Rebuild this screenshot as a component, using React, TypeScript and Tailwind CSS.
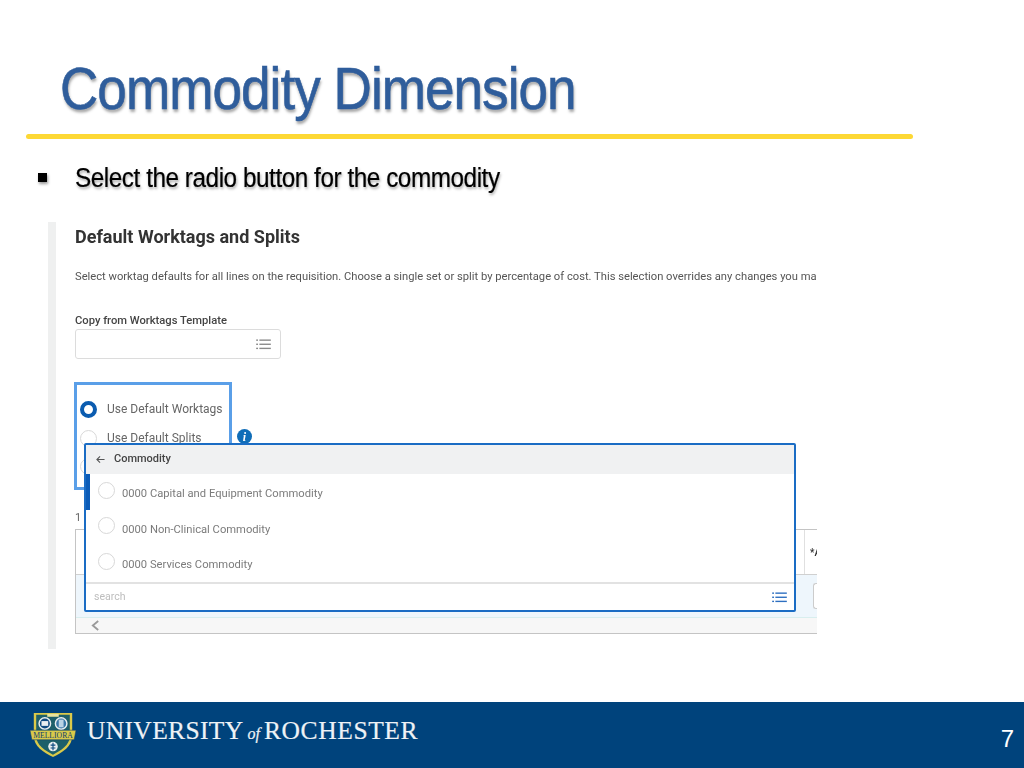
const ListIcon = ({ className }: { className: string }) => (
  <svg viewBox="0 0 16 12" className={className} fill="currentColor">
    <rect x="0" y="0.5" width="2" height="1.5" />
    <rect x="3.5" y="0.5" width="12.5" height="1.5" />
    <rect x="0" y="5" width="2" height="1.5" />
    <rect x="3.5" y="5" width="12.5" height="1.5" />
    <rect x="0" y="9.5" width="2" height="1.5" />
    <rect x="3.5" y="9.5" width="12.5" height="1.5" />
  </svg>
);

const Crest = () => (
  <svg viewBox="0 0 50 50" className="w-[48px] h-[48px]">
    <path d="M5 2 H45 V26 C45 37 35 43 25 48 C15 43 5 37 5 26 Z" fill="#d9c94a" />
    <path d="M7.5 4 H42.5 V26 C42.5 36 33 41 25 45.5 C17 41 7.5 36 7.5 26 Z" fill="#1d5f6a" />
    <rect x="19" y="3" width="12" height="3" fill="#e8e2a0" />
    <circle cx="16.5" cy="13" r="6" fill="#0f4a80" stroke="#e9eef0" strokeWidth="1.5" />
    <circle cx="33.5" cy="13" r="6" fill="#3a78a8" stroke="#e9eef0" strokeWidth="1.5" />
    <rect x="13" y="10.5" width="7" height="5" fill="#e9eef0" />
    <rect x="31" y="9" width="5" height="8" fill="#b9d3e4" />
    <path d="M1 20 H49 L47 30 H3 Z" fill="#d9c94a" stroke="#123f6d" strokeWidth="0.6" />
    <text x="25" y="28" textAnchor="middle" fontSize="8" fill="#123f6d" className="font-['Liberation_Serif',serif]">MELLIORA</text>
    <circle cx="25" cy="37" r="5" fill="#e9eef0" />
    <path d="M25 33 V41 M22.5 35.5 H27.5 M22.5 38.5 H27.5" stroke="#0f4a80" strokeWidth="1.2" />
  </svg>
);

const PopupOption = ({ label, marked }: { label: string; marked?: boolean }) => (
  <div className="relative flex h-[35.5px] items-center pl-[12px] gap-[7px]">
    {marked && <div className="absolute left-0 top-0 h-[36px] w-[4px] bg-[#0b5cb8]" />}
    <span className="mb-[3px] h-[17px] w-[17px] rounded-full border border-[#d8d8d8] bg-white" />
    <span className="mt-[6px] text-[11.2px] text-[#7b7b7b]">{label}</span>
  </div>
);

const App = () => {
  return (
    <div className="flex h-[768px] w-[1024px] flex-col overflow-hidden bg-white font-['Liberation_Sans',Arial,sans-serif]">
      <h1 className="ml-[60px] mt-[53px] h-[81px] origin-left scale-x-[0.885] whitespace-nowrap text-[60px] leading-[72px] tracking-[-1.1px] text-[#2f5d9b] [-webkit-text-stroke:0.6px_#2f5d9b] [text-shadow:1px_3px_3px_rgba(0,0,0,0.35)]">
        Commodity Dimension
      </h1>
      <div className="ml-[26px] h-[5px] w-[887px] rounded-sm bg-[#fdd835]" />

      <div className="mt-[19px] flex h-[40px] items-center">
        <span className="ml-[38px] mb-[2px] h-[9px] w-[9px] bg-black [box-shadow:1px_2px_3px_rgba(0,0,0,0.4)]" />
        <p className="ml-[28px] origin-left scale-x-[0.9] whitespace-nowrap text-[27px] leading-[36px] tracking-[-0.5px] text-black [-webkit-text-stroke:0.2px_#000] [text-shadow:1px_2px_3px_rgba(0,0,0,0.35)]">
          Select the radio button for the commodity
        </p>
      </div>

      <div className="relative ml-[48px] mt-[24px] h-[427px] w-[769px] overflow-hidden border-l-[8px] border-[#eff0f0] pl-[19px] font-['Roboto',sans-serif] blur-[0.4px]">
        <h2 className="mt-[3px] text-[18px] font-bold leading-[24px] text-[#333]">Default Worktags and Splits</h2>
        <p className="mt-[21px] whitespace-nowrap text-[11.2px] leading-[14px] text-[#555]">
          Select worktag defaults for all lines on the requisition. Choose a single set or split by percentage of cost. This selection overrides any changes you made
        </p>
        <label className="mt-[30px] block text-[11.2px] font-medium leading-[14px] text-[#444]">Copy from Worktags Template</label>
        <div className="mt-[1px] flex h-[30px] w-[206px] items-center justify-end rounded-[3px] border border-[#dcdcdc] pr-[9px]">
          <ListIcon className="h-[11px] w-[15px] text-[#8a8a8a]" />
        </div>

        <div className="relative -ml-[1px] mt-[23px] h-[108px] w-[158px] border-[3px] border-[#5a9fe8] pl-[3px] pt-[15px]">
          <div className="flex items-center gap-[10px]">
            <span className="h-[17px] w-[17px] rounded-full border-[4px] border-[#0b5cb0] bg-white" />
            <span className="text-[12px] text-[#666]">Use Default Worktags</span>
          </div>
          <div className="mt-[11px] flex items-center gap-[10px]">
            <span className="h-[17px] w-[17px] rounded-full border border-[#d8d8d8] bg-white" />
            <span className="text-[12px] text-[#666]">Use Default Splits</span>
          </div>
          <span className="absolute left-[3px] top-[73px] h-[17px] w-[17px] rounded-full border border-[#d8d8d8] bg-white" />
        </div>
        <span className="absolute left-[181px] top-[207px] flex h-[15px] w-[15px] items-center justify-center rounded-full bg-[#0f6db8] font-['Liberation_Serif',serif] text-[12px] font-bold italic text-white">i</span>

        <p className="mt-[21px] text-[11px] leading-[14px] text-[#666]">1</p>
        <div className="mt-[4px] flex h-[105px] w-[742px] flex-col border border-[#c4c4c4] border-r-0">
          <div className="flex h-[45px] items-center justify-end border-b border-[#d0d0d0]">
            <span className="flex h-full w-[13px] items-center border-l border-[#e0e0e0] pl-[5px] text-[10px] font-medium text-[#333]">*A</span>
          </div>
          <div className="flex h-[42px] justify-end bg-[#eef6fc] py-[8px]">
            <span className="h-full w-[4px] rounded-l-[3px] border border-r-0 border-[#ccc] bg-white" />
          </div>
          <div className="flex flex-1 items-center border-t border-[#d8eeee] bg-[#f7f7f7] pl-[15px]">
            <svg viewBox="0 0 10 12" className="h-[11px] w-[9px]" fill="none" stroke="#9a9a9a" strokeWidth="2">
              <path d="M8 1 L2 6 L8 11" />
            </svg>
          </div>
        </div>

        <div className="absolute left-[28px] top-[221px] flex h-[169px] w-[712px] flex-col rounded-[2px] border-2 border-[#1a6cc4] bg-white">
          <div className="flex h-[29px] items-center gap-[9px] bg-[#f0f1f2] pl-[10px]">
            <svg viewBox="0 0 10 10" className="h-[9px] w-[9px]" fill="none" stroke="#555" strokeWidth="1.2">
              <path d="M9.5 5 H1 M4.5 1.5 L1 5 L4.5 8.5" />
            </svg>
            <span className="text-[11px] font-medium text-[#444]">Commodity</span>
          </div>
          <div className="flex-1">
            <PopupOption label="0000 Capital and Equipment Commodity" marked />
            <PopupOption label="0000 Non-Clinical Commodity" />
            <PopupOption label="0000 Services Commodity" />
          </div>
          <div className="flex h-[28px] items-center justify-between border-t-2 border-[#e2e2e2] pl-[8px] pr-[7px]">
            <span className="text-[10.5px] text-[#bdbdbd]">search</span>
            <ListIcon className="h-[11px] w-[15px] text-[#2d6fc0]" />
          </div>
        </div>
      </div>

      <footer className="mt-auto flex h-[66px] items-center bg-[#00437c] pl-[29px] pr-[10px]">
        <Crest />
        <div className="ml-[10px] flex items-baseline pb-[8px] font-['Liberation_Serif',serif] text-[#eef2f6] [-webkit-text-stroke:0.2px_#eef2f6]">
          <span className="text-[25.5px] tracking-[0.35px]">UNIVERSITY</span>
          <span className="mx-[4px] text-[16px] italic">of</span>
          <span className="text-[25.5px] tracking-[0.6px]">ROCHESTER</span>
        </div>
        <span className="ml-auto mt-[8px] text-[24px] text-white">7</span>
      </footer>
    </div>
  );
};

export default App;
